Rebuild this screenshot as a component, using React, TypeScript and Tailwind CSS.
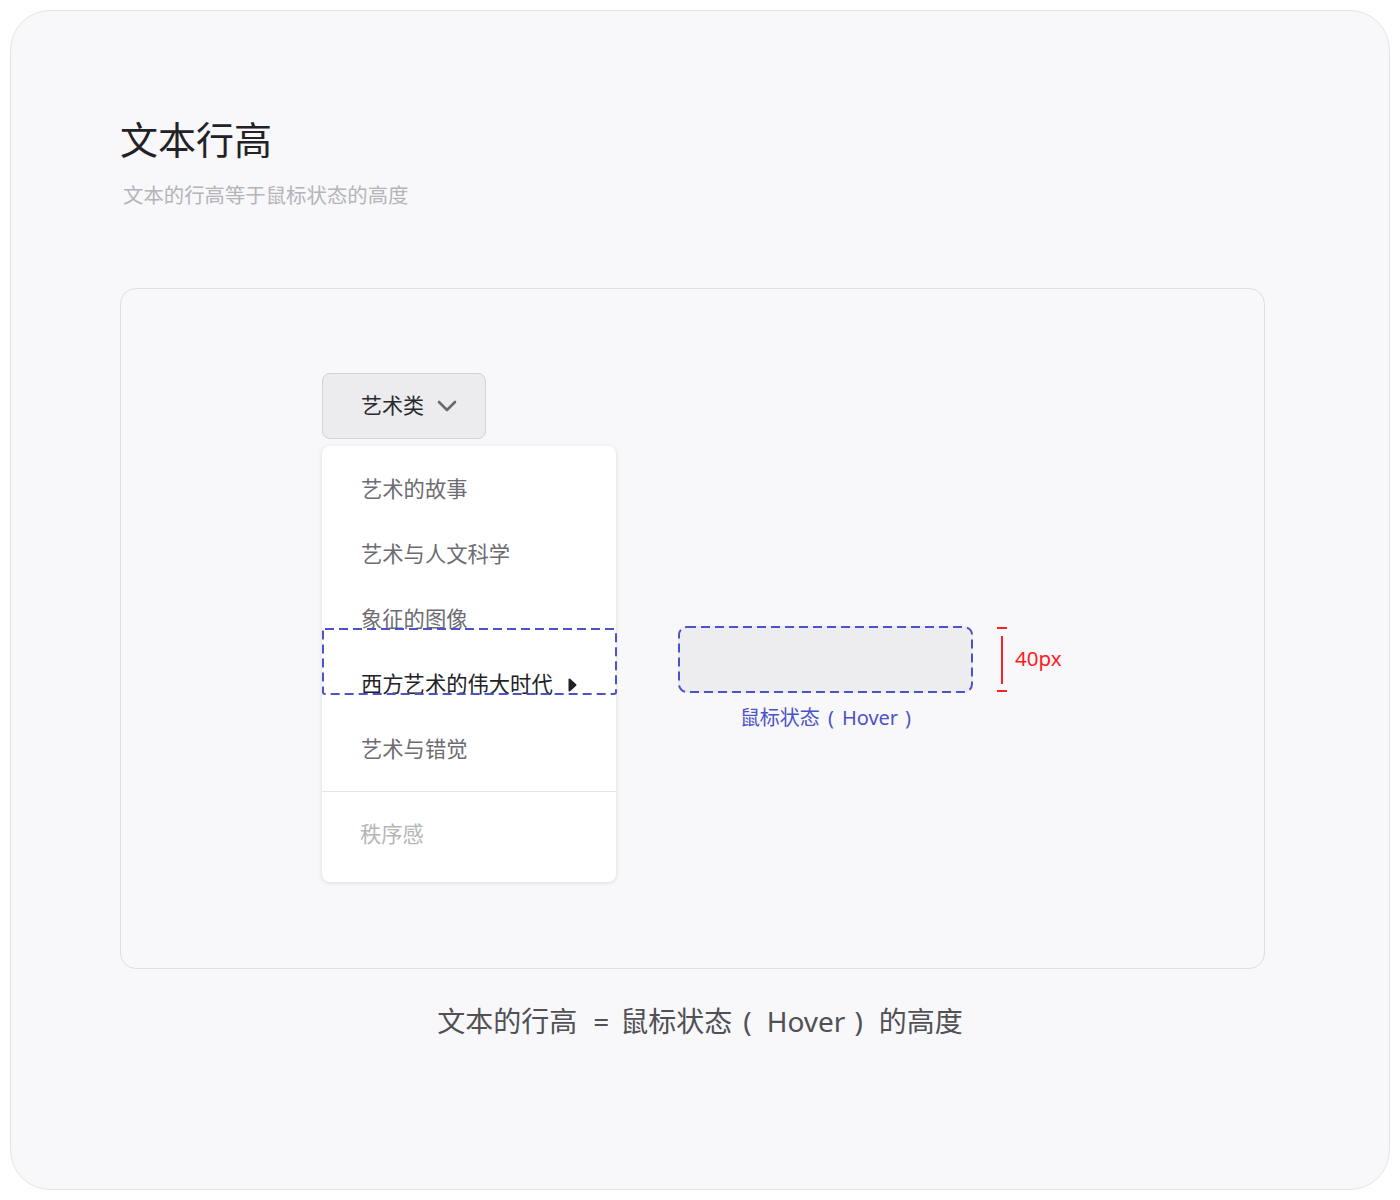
import React from 'react';

const FONT = '"Noto Sans", "Noto Sans CJK SC", sans-serif';

const items = ['艺术的故事', '艺术与人文科学', '象征的图像', '西方艺术的伟大时代', '艺术与错觉'];

// dashed outline drawn as svg so the dash rhythm matches the mockup
const DashedFrame: React.FC<{ w: number; h: number; r: number }> = ({ w, h, r }) => (
  <svg className="absolute left-0 top-0" width={w} height={h} viewBox={`0 0 ${w} ${h}`} fill="none">
    <rect x="1" y="1" width={w - 2} height={h - 2} rx={r} stroke="#4b53c6" strokeWidth="2" strokeDasharray="9 5" />
  </svg>
);

const App: React.FC = () => {
  return (
    <div className="min-h-screen bg-white p-[10px]" style={{ fontFamily: FONT }}>
      <div className="w-[1380px] h-[1180px] rounded-[40px] border border-[#e4e4e8] bg-[#f8f8fa] pt-[106px]">
        <div className="pl-[109px]">
          <h1 className="text-[38px] leading-[44px] text-[#222226]">文本行高</h1>
          <p className="mt-[20px] pl-[3px] text-[20.4px] leading-[28px] text-[#b4b4b9]">文本的行高等于鼠标状态的高度</p>
        </div>

        <div className="ml-[109px] mt-[79px] w-[1145px] h-[681px] rounded-[16px] border border-[#dedee2] pl-[201px] pt-[84px]">
          <div className="flex items-start">
            {/* dropdown */}
            <div className="w-[294px]">
              <button className="flex h-[66px] w-[164px] items-center rounded-[8px] border border-[#d2d2d7] bg-[#ececef] pl-[38px]">
                <span className="text-[21px] text-[#2a2a2e]">艺术类</span>
                <svg className="ml-[13px]" width="20" height="12" viewBox="0 0 20 12" fill="none">
                  <path d="M2 2l8 8 8-8" stroke="#6a6a70" strokeWidth="2.6" strokeLinecap="round" strokeLinejoin="round" />
                </svg>
              </button>

              <div className="relative mt-[7px] rounded-[8px] bg-white shadow-[0_1px_4px_rgba(0,0,0,0.12)]">
                <div className="pt-[10px] pb-[10px]">
                  {items.map((t, i) => (
                    <div key={t} className="flex h-[65px] items-center pl-[39px]">
                      <span className={`text-[21.3px] ${i === 3 ? 'text-[#222226]' : 'text-[#6c6c72]'}`}>{t}</span>
                      {i === 3 && (
                        <svg className="ml-[15px] mt-[2px]" width="9" height="14" viewBox="0 0 9 14">
                          <path d="M1.5 1.5 L7.5 7 L1.5 12.5 Z" fill="#222226" stroke="#222226" strokeWidth="2" strokeLinejoin="round" />
                        </svg>
                      )}
                    </div>
                  ))}
                </div>
                <div className="border-t border-[#e6e6ea] pt-[9px] pb-[16px]">
                  <div className="flex h-[65px] items-center pl-[38px]">
                    <span className="text-[21.3px] text-[#b6b6ba]">秩序感</span>
                  </div>
                </div>
                <div className="absolute left-0 top-[182px] h-[67px] w-[295px]">
                  <DashedFrame w={295} h={67} r={2} />
                </div>
              </div>
            </div>

            {/* hover annotation */}
            <div className="ml-[62px] mt-[253px] flex items-start">
              <div className="flex flex-col items-center">
                <div className="relative h-[67px] w-[295px] rounded-[8px] bg-[#ededf0]">
                  <DashedFrame w={295} h={67} r={8} />
                </div>
                <p className="mt-[11px] text-[20px] leading-[28px] text-[#4b53c6]">
                  鼠标状态<span className="ml-[8px] mr-[8px]">(</span>Hover<span className="ml-[7px]">)</span>
                </p>
              </div>
              <div className="ml-[23px] flex items-center">
                <svg width="12" height="67" viewBox="0 0 12 67" fill="none">
                  <path d="M1 2h10M1 65h10" stroke="#ff2020" strokeWidth="2" />
                  <path d="M6 10v48" stroke="#ff2020" strokeWidth="2" />
                </svg>
                <span className="ml-[7px] mb-[4px] text-[20.5px] leading-[28px] text-[#ff1a1a]">40px</span>
              </div>
            </div>
          </div>
        </div>

        <p className="mt-[32px] text-center text-[28px] leading-[40px] text-[#505055]">
          文本的行高<span className="ml-[16px] mr-[11px]">=</span>鼠标状态<span className="ml-[11px] mr-[15px]">(</span>Hover<span className="ml-[9px] mr-[16px]">)</span>的高度
        </p>
      </div>
    </div>
  );
};

export default App;
